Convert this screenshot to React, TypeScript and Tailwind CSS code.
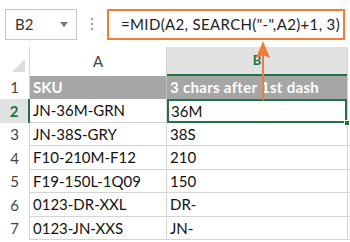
import React from 'react';

const rows = [
  { n: 2, sku: 'JN-36M-GRN', res: '36M' },
  { n: 3, sku: 'JN-38S-GRY', res: '38S' },
  { n: 4, sku: 'F10-210M-F12', res: '210' },
  { n: 5, sku: 'F19-150L-1Q09', res: '150' },
  { n: 6, sku: '0123-DR-XXL', res: 'DR-' },
  { n: 7, sku: '0123-JN-XXS', res: 'JN-' },
];

export default function App() {
  return (
    <div className="relative w-[350px] h-[242px] overflow-hidden bg-white text-[#111] font-['Lato','Open_Sans',sans-serif]">
      {/* Formula bar */}
      <div className="flex items-center h-[47px] pt-[1px]">
        <div className="ml-[5px] w-[72px] h-[31px] border border-[#c8c8c8] flex items-center pl-[9px] pr-[8px] justify-between">
          <span className="text-[15px] text-[#333]">B2</span>
          <span className="w-0 h-0 border-l-[4px] border-r-[4px] border-t-[5px] border-l-transparent border-r-transparent border-t-[#777]" />
        </div>
        <div className="w-[30px] flex flex-col items-center gap-[3px]">
          <span className="w-[2px] h-[2px] bg-[#9a9a9a]" />
          <span className="w-[2px] h-[2px] bg-[#9a9a9a]" />
          <span className="w-[2px] h-[2px] bg-[#9a9a9a]" />
        </div>
        <div className="flex-1 mr-[5px] h-[31px] border-2 border-[#f47a38] flex items-center pl-[12px] text-[15px] tracking-[0.35px] text-[#222] whitespace-nowrap">
          =MID(A2, SEARCH("-",A2)+1, 3)
        </div>
      </div>

      {/* Sheet */}
      <div className="grid grid-cols-[30px_137px_180px_3px]">
        {/* column headers */}
        <div className="h-[29px] border-r border-[#d4d4d4] flex items-end justify-end pr-[4px] pb-[4px]">
          <svg width="13" height="13" viewBox="0 0 13 13">
            <path d="M13 0 L13 13 L0 13 Z" fill="#dcdcdc" />
          </svg>
        </div>
        <div className="h-[29px] border-r border-[#d4d4d4] flex items-center justify-center text-[15px] text-[#444]">A</div>
        <div className="h-[29px] bg-[#e2e2e2] border-b-2 border-[#217346] flex items-center justify-center text-[13px] font-bold text-[#217346]">B</div>
        <div className="h-[29px] bg-white border-l border-[#d4d4d4]" />

        {/* row 1 */}
        <div className="h-[23px] flex items-center justify-center text-[15px] text-[#444] border-r border-[#d4d4d4]">1</div>
        <div className="h-[23px] bg-[#a6a6a6] flex items-center pl-[3px] text-[15px] font-bold text-white border-r border-[#bdbdbd]">SKU</div>
        <div className="h-[23px] bg-[#a6a6a6] flex items-center pl-[3px] text-[15px] tracking-[0.3px] font-bold text-white whitespace-nowrap">3 chars after 1st dash</div>
        <div className="h-[23px] border-l border-[#d4d4d4]" />

        {rows.map((r) => {
          const sel = r.n === 2;
          return (
            <React.Fragment key={r.n}>
              <div
                className={
                  sel
                    ? 'h-[23.5px] bg-[#e2e2e2] border-r-2 border-[#217346] flex items-center justify-center text-[15px] font-bold text-[#217346]'
                    : 'h-[23.5px] border-r border-[#d4d4d4] flex items-center justify-center text-[15px] text-[#444]'
                }
              >
                {r.n}
              </div>
              <div className="h-[23.5px] border-r border-b border-[#d4d4d4] flex items-center pl-[3px] text-[15px]">{r.sku}</div>
              <div
                className={
                  sel
                    ? 'relative h-[23.5px] border-2 border-[#217346] flex items-center pl-[2px] text-[15px]'
                    : 'h-[23.5px] border-b border-[#d4d4d4] flex items-center pl-[3px] text-[15px]'
                }
              >
                {r.res}
                {sel && <span className="absolute -right-[5px] -bottom-[5px] w-[6px] h-[6px] bg-[#217346] border border-white" />}
              </div>
              <div className="h-[23.5px] border-l border-b border-[#d4d4d4]" />
            </React.Fragment>
          );
        })}
      </div>

      {/* arrow from B2 to the formula */}
      <svg className="absolute left-[254px] top-[40px]" width="18" height="60" viewBox="0 0 18 60">
        <line x1="9" y1="10" x2="9" y2="60" stroke="#f47a38" strokeWidth="2" />
        <path d="M9 1 L16 18 L9 15 L2 18 Z" fill="#f47a38" />
      </svg>
    </div>
  );
}
